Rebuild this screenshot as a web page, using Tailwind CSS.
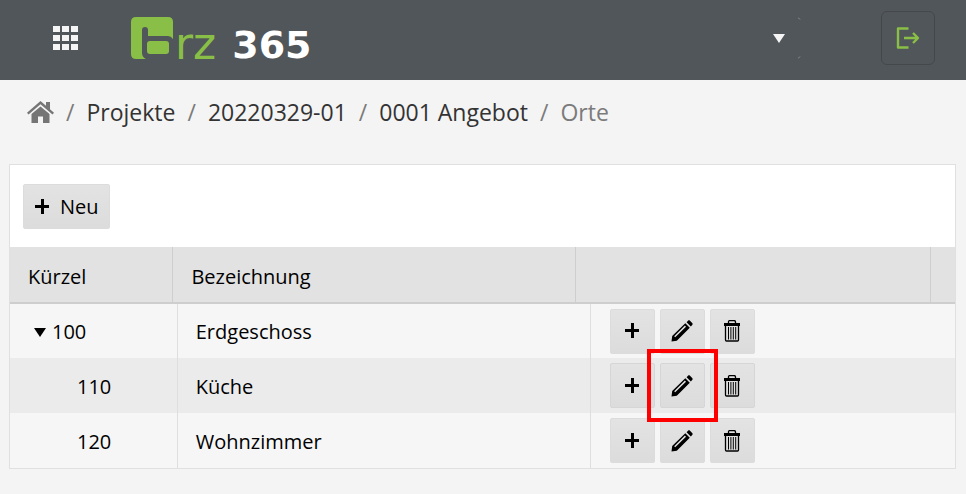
<!DOCTYPE html>
<html lang="de">
<head>
    <meta charset="UTF-8">
    <meta name="viewport" content="width=device-width, initial-scale=1.0">
    <title>brz 365 - Orte</title>
    <script src="https://cdn.jsdelivr.net/npm/@tailwindcss/browser@4"></script>
</head>
<body class="min-h-screen bg-[#f4f4f4] font-['Open_Sans',sans-serif] text-[20px] leading-7 text-black">
    <!-- Icons -->
    <svg class="hidden">
        <symbol id="plus" viewBox="0 0 16 16">
            <path d="M7 0h3v6h5v3h-5v6H7V9H1V6h6z"/>
        </symbol>
        <symbol id="pencil" viewBox="0 0 22 22">
            <path fill-rule="evenodd" d="M.5 21.500L1.200 16 14.300 3.200l4.500 4.500L5.800 20.700zM3.200 16.200L4.200 17.200 15 6.700 13.900 5.600z"/>
            <path d="M15.600 2.200L17 .8c.6-.6 1.400-.6 2 0l2.200 2.200c.6.600.6 1.400 0 2L19.800 6.400z"/>
        </symbol>
        <symbol id="trash" viewBox="0 0 17 22">
            <path d="M0 3h16v3H0z"/>
            <path d="M4.500 3.500V2q0-1.500 1.500-1.500h4q1.500 0 1.500 1.500v1.500M1.500 5.500V20q0 1 1 1h11q1 0 1-1V5.500" fill="none" stroke="currentColor" stroke-width="1.300"/>
            <path d="M4.500 7v12.500M6.900 7v12.500M9.300 7v12.500M11.700 7v12.500" fill="none" stroke="currentColor"/>
        </symbol>
    </svg>

    <header class="flex h-20 items-center bg-[#51565a] pr-[31px] pl-[53px]">
        <button type="button" aria-label="Menü" class="mb-1 text-[#f5f5f5]">
            <svg class="h-6 w-[25px]" viewBox="0 0 25 24" fill="currentColor">
                <path d="M0 0h7v6H0zM9 0h7v6H9zM18 0h7v6h-7zM0 9h7v6H0zM9 9h7v6H9zM18 9h7v6h-7zM0 18h7v6H0zM9 18h7v6H9zM18 18h7v6h-7z"/>
            </svg>
        </button>
        <a href="#" aria-label="brz 365" class="mb-1 ml-[53px] flex items-end font-['DejaVu_Sans',sans-serif]">
            <svg class="h-[42px] w-[42px]" viewBox="0 0 42 42" fill="#8abf47">
                <path d="M5 0h32q5 0 5 5v17q-2-3-5-3H17V13q0-3-3-3T11 13v23q0 4 4 6H5q-5 0-5-5V5q0-5 5-5z"/>
                <rect x="16" y="24" width="22" height="13" rx="3"/>
            </svg>
            <span class="ml-0.5 text-[44px] leading-[30px] text-[#8abf47]">rz</span>
            <span class="ml-4 text-[38px] leading-7 font-bold text-white">365</span>
        </a>
        <button type="button" aria-label="Auswahl" class="mb-1 ml-auto flex h-[42px] w-7 items-center justify-between text-[#f5f5f5]">
            <svg class="h-[9px] w-3" viewBox="0 0 12 9" fill="currentColor"><path d="M0 0h12L6 9z"/></svg>
            <svg class="h-[42px] w-[3px]" viewBox="0 0 3 42" fill="none" stroke="#8b8f92"><path d="M0 .5l2 2M2 39.500l-2 2"/></svg>
        </button>
        <button type="button" aria-label="Abmelden" class="mb-1 ml-20 flex h-[54px] w-[54px] items-center justify-center rounded-md border border-[#44484b] text-[#8abf47]">
            <svg class="h-[22px] w-6" viewBox="0 0 24 22" fill="none" stroke="currentColor" stroke-width="2.400" stroke-linejoin="round">
                <path d="M12.500 1.500H2v19h10.500M8 11h14M17 6l5 5-5 5"/>
            </svg>
        </button>
    </header>

    <nav aria-label="Breadcrumb" class="px-[27px] pt-[15px] pb-[35px]">
        <ol class="flex items-center gap-3 text-[23px] leading-[34px] text-[#7b7b7b]">
            <li>
                <a href="#" aria-label="Startseite">
                    <svg class="h-[22px] w-[27px]" viewBox="0 0 27 22" fill="#757575">
                        <path d="M13.500 0L19 4.700V1h4v7.300l4 3.400-1.500 1.800L13.500 3.300 1.500 13.500 0 11.700z"/>
                        <path d="M13.500 5.500L22.500 13v9h-6.500v-6.500h-5V22H4.500v-9z"/>
                    </svg>
                </a>
            </li>
            <li>/</li>
            <li><a href="#" class="text-[#333]">Projekte</a></li>
            <li>/</li>
            <li><a href="#" class="text-[#333]">20220329-01</a></li>
            <li>/</li>
            <li><a href="#" class="text-[#333]">0001 Angebot</a></li>
            <li>/</li>
            <li>Orte</li>
        </ol>
    </nav>

    <main class="mr-2.5 ml-[9px] border border-[#e0e0e0] bg-white">
        <div class="px-[13px] pt-[19px] pb-[18px]">
            <button type="button" class="flex h-[45px] items-center gap-2.5 rounded-xs border border-[#dcdcdc] bg-linear-to-b from-[#e3e3e3] to-[#dcdcdc] px-2.5">
                <svg class="size-4" aria-hidden="true"><use href="#plus"/></svg>
                Neu
            </button>
        </div>

        <div class="border-b-2 border-[#cecece] bg-[#e2e2e2] pr-6">
            <table class="w-full table-fixed border-collapse text-left">
                <colgroup>
                    <col class="w-[17.700%]">
                    <col class="w-[43.700%]">
                    <col>
                </colgroup>
                <thead>
                    <tr class="h-[55px]">
                        <th class="border-r border-[#cecece] pt-1 pl-[18px] font-normal">Kürzel</th>
                        <th class="border-r border-[#cecece] pt-1 pl-[18px] font-normal">Bezeichnung</th>
                        <td class="border-r border-[#cecece]"></td>
                    </tr>
                </thead>
            </table>
        </div>

        <table class="w-full table-fixed border-collapse">
            <colgroup>
                <col class="w-[17.700%]">
                <col class="w-[43.700%]">
                <col>
            </colgroup>
            <tbody>
                <tr class="h-[54px] bg-[#f6f6f6]">
                    <td class="border-r border-[#dedede] pt-0.5">
                        <div class="flex items-center gap-1.5 pl-6">
                            <button type="button" aria-label="Zuklappen">
                                <svg class="h-[9px] w-3" viewBox="0 0 12 9"><path d="M0 0h12L6 9z"/></svg>
                            </button>
                            100
                        </div>
                    </td>
                    <td class="border-r border-[#dedede] pt-0.5 pl-[18px]">Erdgeschoss</td>
                    <td class="pl-[19px]">
                        <div class="flex gap-[5px]">
                            <button type="button" aria-label="Hinzufügen" class="flex size-[45px] items-center justify-center rounded-xs border border-[#dcdcdc] bg-linear-to-b from-[#e3e3e3] to-[#dcdcdc]"><svg class="size-4"><use href="#plus"/></svg></button>
                            <button type="button" aria-label="Bearbeiten" class="flex size-[45px] items-center justify-center rounded-xs border border-[#dcdcdc] bg-linear-to-b from-[#e3e3e3] to-[#dcdcdc]"><svg class="size-[22px]"><use href="#pencil"/></svg></button>
                            <button type="button" aria-label="Löschen" class="flex size-[45px] items-center justify-center rounded-xs border border-[#dcdcdc] bg-linear-to-b from-[#e3e3e3] to-[#dcdcdc]"><svg class="h-[22px] w-[17px]"><use href="#trash"/></svg></button>
                        </div>
                    </td>
                </tr>
                <tr class="h-[55px] bg-[#ebebeb]">
                    <td class="border-r border-[#dedede] pt-0.5 pl-[67px]">110</td>
                    <td class="border-r border-[#dedede] pt-0.5 pl-[18px]">Küche</td>
                    <td class="pl-[19px]">
                        <div class="flex gap-[5px]">
                            <button type="button" aria-label="Hinzufügen" class="flex size-[45px] items-center justify-center rounded-xs border border-[#d6d6d6] bg-linear-to-b from-[#e3e3e3] to-[#dcdcdc]"><svg class="size-4"><use href="#plus"/></svg></button>
                            <div class="relative">
                                <button type="button" aria-label="Bearbeiten" class="flex size-[45px] items-center justify-center rounded-xs border border-[#d6d6d6] bg-linear-to-b from-[#e3e3e3] to-[#dcdcdc]"><svg class="size-[22px]"><use href="#pencil"/></svg></button>
                                <!-- Markierung -->
                                <div class="pointer-events-none absolute -inset-x-[13px] -inset-y-[14px] z-10 border-4 border-[#fe0000]"></div>
                            </div>
                            <button type="button" aria-label="Löschen" class="flex size-[45px] items-center justify-center rounded-xs border border-[#d6d6d6] bg-linear-to-b from-[#e3e3e3] to-[#dcdcdc]"><svg class="h-[22px] w-[17px]"><use href="#trash"/></svg></button>
                        </div>
                    </td>
                </tr>
                <tr class="h-[55px] bg-[#f6f6f6]">
                    <td class="border-r border-[#dedede] pt-0.5 pl-[67px]">120</td>
                    <td class="border-r border-[#dedede] pt-0.5 pl-[18px]">Wohnzimmer</td>
                    <td class="pl-[19px]">
                        <div class="flex gap-[5px]">
                            <button type="button" aria-label="Hinzufügen" class="flex size-[45px] items-center justify-center rounded-xs border border-[#dcdcdc] bg-linear-to-b from-[#e3e3e3] to-[#dcdcdc]"><svg class="size-4"><use href="#plus"/></svg></button>
                            <button type="button" aria-label="Bearbeiten" class="flex size-[45px] items-center justify-center rounded-xs border border-[#dcdcdc] bg-linear-to-b from-[#e3e3e3] to-[#dcdcdc]"><svg class="size-[22px]"><use href="#pencil"/></svg></button>
                            <button type="button" aria-label="Löschen" class="flex size-[45px] items-center justify-center rounded-xs border border-[#dcdcdc] bg-linear-to-b from-[#e3e3e3] to-[#dcdcdc]"><svg class="h-[22px] w-[17px]"><use href="#trash"/></svg></button>
                        </div>
                    </td>
                </tr>
            </tbody>
        </table>
    </main>
</body>
</html>
